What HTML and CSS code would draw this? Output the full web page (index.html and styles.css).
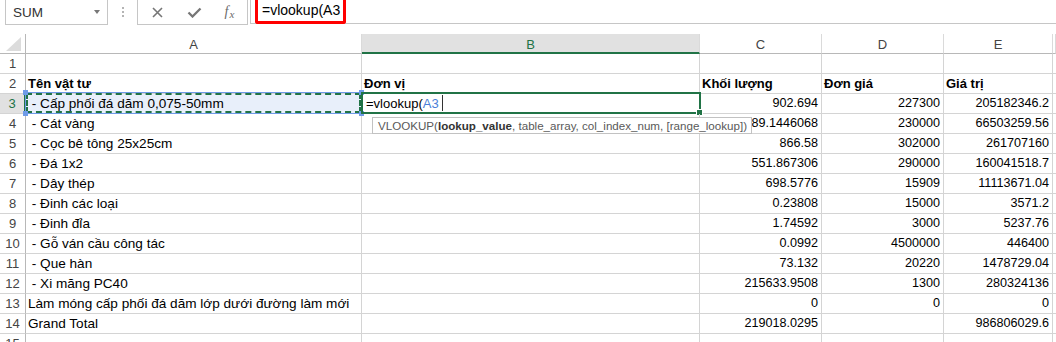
FILE: index.html
```html
<!DOCTYPE html>
<html>
<head>
<meta charset="utf-8">
<link rel="stylesheet" href="styles.css">
</head>
<body>
<div class="topbar">
  <div class="namebox"><span class="nb-text">SUM</span><span class="nb-arrow"></span></div>
  <div class="grip"><i></i><i></i><i></i></div>
  <div class="fbtns">
    <span class="fbtn"><svg width="11" height="11" viewBox="0 0 11 11"><path d="M1 1L10 10M10 1L1 10" stroke="#767676" stroke-width="1.6" fill="none"/></svg></span>
    <span class="fbtn"><svg width="15" height="11" viewBox="0 0 15 11"><path d="M1.5 5.5L5.5 9.5L13.5 1.5" stroke="#767676" stroke-width="2.3" fill="none"/></svg></span>
    <span class="fbtn fx"><i>f</i><i class="sx">x</i></span>
  </div>
  <div class="formula"><span class="hl">=vlookup(A3</span></div>
</div>

<div class="sheet">
  <div class="ch corner"><svg width="25" height="19" viewBox="0 0 25 19"><polygon points="21,3 21,17 6,17" fill="#dcdcdc"/></svg></div>
  <div class="ch">A</div><div class="ch sel">B</div><div class="ch">C</div><div class="ch">D</div><div class="ch">E</div><div class="ch last"></div>

  <div class="rh">1</div><div class="c"></div><div class="c"></div><div class="c"></div><div class="c"></div><div class="c"></div><div class="c last"></div>

  <div class="rh">2</div><div class="c b">Tên vật tư</div><div class="c b">Đơn vị</div><div class="c b">Khối lượng</div><div class="c b">Đơn giá</div><div class="c b">Giá trị</div><div class="c last"></div>

  <div class="rh rsel">3</div>
  <div class="c ref"> - Cấp phối đá dăm 0,075-50mm<span class="refbox"><span class="ants"></span><i class="k k1"></i><i class="k k2"></i><i class="k k3"></i><i class="k k4"></i></span></div>
  <div class="c act">=vlookup(<span class="blue">A3</span><span class="caret"></span><span class="actbox"><i class="fill"></i></span></div>
  <div class="c n">902.694</div><div class="c n">227300</div><div class="c n">205182346.2</div><div class="c last"></div>

  <div class="rh">4</div><div class="c"> - Cát vàng</div>
  <div class="c tipcell"><span class="tip">VLOOKUP(<b>lookup_value</b>, table_array, col_index_num, [range_lookup])</span></div>
  <div class="c n">89.1446068</div><div class="c n">230000</div><div class="c n">66503259.56</div><div class="c last"></div>

  <div class="rh">5</div><div class="c"> - Cọc bê tông 25x25cm</div><div class="c"></div><div class="c n">866.58</div><div class="c n">302000</div><div class="c n">261707160</div><div class="c last"></div>

  <div class="rh">6</div><div class="c"> - Đá 1x2</div><div class="c"></div><div class="c n">551.867306</div><div class="c n">290000</div><div class="c n">160041518.7</div><div class="c last"></div>

  <div class="rh">7</div><div class="c"> - Dây thép</div><div class="c"></div><div class="c n">698.5776</div><div class="c n">15909</div><div class="c n">11113671.04</div><div class="c last"></div>

  <div class="rh">8</div><div class="c"> - Đinh các loại</div><div class="c"></div><div class="c n">0.23808</div><div class="c n">15000</div><div class="c n">3571.2</div><div class="c last"></div>

  <div class="rh">9</div><div class="c"> - Đinh đỉa</div><div class="c"></div><div class="c n">1.74592</div><div class="c n">3000</div><div class="c n">5237.76</div><div class="c last"></div>

  <div class="rh">10</div><div class="c"> - Gỗ ván cầu công tác</div><div class="c"></div><div class="c n">0.0992</div><div class="c n">4500000</div><div class="c n">446400</div><div class="c last"></div>

  <div class="rh">11</div><div class="c"> - Que hàn</div><div class="c"></div><div class="c n">73.132</div><div class="c n">20220</div><div class="c n">1478729.04</div><div class="c last"></div>

  <div class="rh">12</div><div class="c"> - Xi măng PC40</div><div class="c"></div><div class="c n">215633.9508</div><div class="c n">1300</div><div class="c n">280324136</div><div class="c last"></div>

  <div class="rh">13</div><div class="c">Làm móng cấp phối đá dăm lớp dưới đường làm mới</div><div class="c"></div><div class="c n">0</div><div class="c n">0</div><div class="c n">0</div><div class="c last"></div>

  <div class="rh">14</div><div class="c">Grand Total</div><div class="c"></div><div class="c n">219018.0295</div><div class="c n"></div><div class="c n">986806029.6</div><div class="c last"></div>

  <div class="rh">15</div><div class="c"></div><div class="c"></div><div class="c"></div><div class="c"></div><div class="c"></div><div class="c last"></div>
</div>
</body>
</html>
```

FILE: styles.css
```css
html, body {
  margin: 0;
  padding: 0;
  background: #fff;
  overflow: hidden;
}
body {
  width: 1056px;
  height: 342px;
  font-family: "Liberation Sans", Arial, sans-serif;
  font-size: 13px;
  color: #000;
}

/* ---------- formula bar ---------- */
.topbar {
  display: flex;
  height: 25px;
  margin-bottom: 9px;
}
.namebox {
  margin-left: 5px;
  width: 103px;
  box-sizing: border-box;
  border: 1px solid #c6c6c6;
  border-top: 0;
  display: flex;
  align-items: center;
  justify-content: space-between;
  padding: 0 7px 0 7px;
  color: #333;
  font-size: 13.5px;
}
.nb-arrow {
  width: 0;
  height: 0;
  border-left: 3.5px solid transparent;
  border-right: 3.5px solid transparent;
  border-top: 4px solid #777;
  margin-top: -1px;
}
.grip {
  width: 29px;
  display: flex;
  flex-direction: column;
  align-items: center;
  justify-content: center;
  gap: 2px;
  padding-bottom: 1px;
}
.grip i {
  display: block;
  width: 2px;
  height: 2px;
  background: #b4b4b4;
}
.fbtns {
  width: 111px;
  box-sizing: border-box;
  border: 1px solid #c6c6c6;
  border-top: 0;
  display: grid;
  grid-template-columns: 38px 36px 35px;
  align-items: center;
  justify-items: center;
}
.fbtn {
  display: flex;
  align-items: center;
  justify-content: center;
}
.fx {
  font-family: "Liberation Serif", "Times New Roman", serif;
  font-style: italic;
  color: #6a6a6a;
  font-size: 14px;
}
.fx i { font-style: italic; }
.fx .sx { font-size: 11px; margin-top: 4px; margin-left: 1px; }
.formula {
  flex: 1;
  margin-left: 2px;
  height: 24px;
  box-sizing: border-box;
  border-left: 1px solid #c6c6c6;
  border-bottom: 1px solid #c6c6c6;
  display: flex;
  align-items: flex-start;
}
.hl {
  margin-left: 4px;
  height: 24px;
  width: 91px;
  box-sizing: border-box;
  border: 3px solid #f00;
  border-top: 0;
  border-radius: 0 0 3px 3px;
  padding-left: 4px;
  font-size: 14px;
  line-height: 21px;
  color: #000;
  white-space: nowrap;
  background: #fff;
}

/* ---------- sheet grid ---------- */
.sheet {
  display: grid;
  grid-template-columns: 26px 336px 338px 122px 122px 109px 3px;
  grid-auto-rows: 20px;
}
.ch, .rh, .c {
  box-sizing: border-box;
  white-space: pre;
  line-height: 19px;
}
.ch {
  text-align: center;
  color: #444;
  border-right: 1px solid #dadada;
  border-bottom: 1px solid #b8b8b8;
  padding-top: 1px;
}
.ch.corner {
  border-right: 1px solid #b8b8b8;
  padding: 0;
}
.ch.corner svg { display: block; }
.ch.sel {
  background: #e1e1e1;
  color: #217346;
  border-bottom: 2px solid #217346;
}
.rh {
  text-align: center;
  color: #444;
  border-right: 1px solid #b8b8b8;
  border-bottom: 1px solid #d4d4d4;
}
.rh.rsel {
  background: #e1e1e1;
  color: #217346;
  border-right: 2px solid #217346;
}
.c {
  border-right: 1px solid #d4d4d4;
  border-bottom: 1px solid #d4d4d4;
  padding: 0 2px;
  overflow: visible;
  font-size: 13.6px;
}
.c.last { border-right: 0; }
.c.b { font-weight: bold; font-size: 13px; }
.c.n {
  text-align: right;
  padding-right: 3px;
  font-size: 12.6px;
}

/* referenced cell A3 */
.c.ref {
  position: relative;
  background: #e8effa;
}
.refbox {
  position: absolute;
  left: -1px;
  top: -2px;
  right: -1px;
  bottom: -1px;
  border: 1px solid #6f9be8;
}
.ants {
  position: absolute;
  inset: 0;
  border: 2px dashed #217346;
}
.k {
  position: absolute;
  width: 5px;
  height: 5px;
  background: #6f9be8;
}
.k1 { left: -3px; top: -3px; }
.k2 { right: -3px; top: -3px; }
.k3 { left: -3px; bottom: -3px; }
.k4 { right: -3px; bottom: -3px; }

/* active cell B3 */
.c.act {
  position: relative;
  padding-left: 4px;
  z-index: 2;
  font-size: 13px;
}
.blue { color: #4a7fd8; }
.caret {
  display: inline-block;
  width: 1px;
  height: 16px;
  background: #333;
  vertical-align: -3px;
  margin-left: 3px;
}
.actbox {
  position: absolute;
  left: -1px;
  top: -2px;
  right: -2px;
  bottom: -1px;
  border: 2px solid #217346;
}
.fill {
  position: absolute;
  right: -4px;
  bottom: -4px;
  width: 5px;
  height: 5px;
  background: #217346;
  border: 1px solid #fff;
}

/* tooltip */
.c.tipcell {
  position: relative;
  z-index: 3;
}
.tip {
  position: absolute;
  left: 10px;
  top: 3px;
  height: 17px;
  box-sizing: border-box;
  padding: 0 4px 0 5px;
  border: 1px solid #c2c2c2;
  background: #fff;
  color: #595959;
  font-size: 11.6px;
  line-height: 15px;
  white-space: nowrap;
}
.tip b { color: #333; }
```
